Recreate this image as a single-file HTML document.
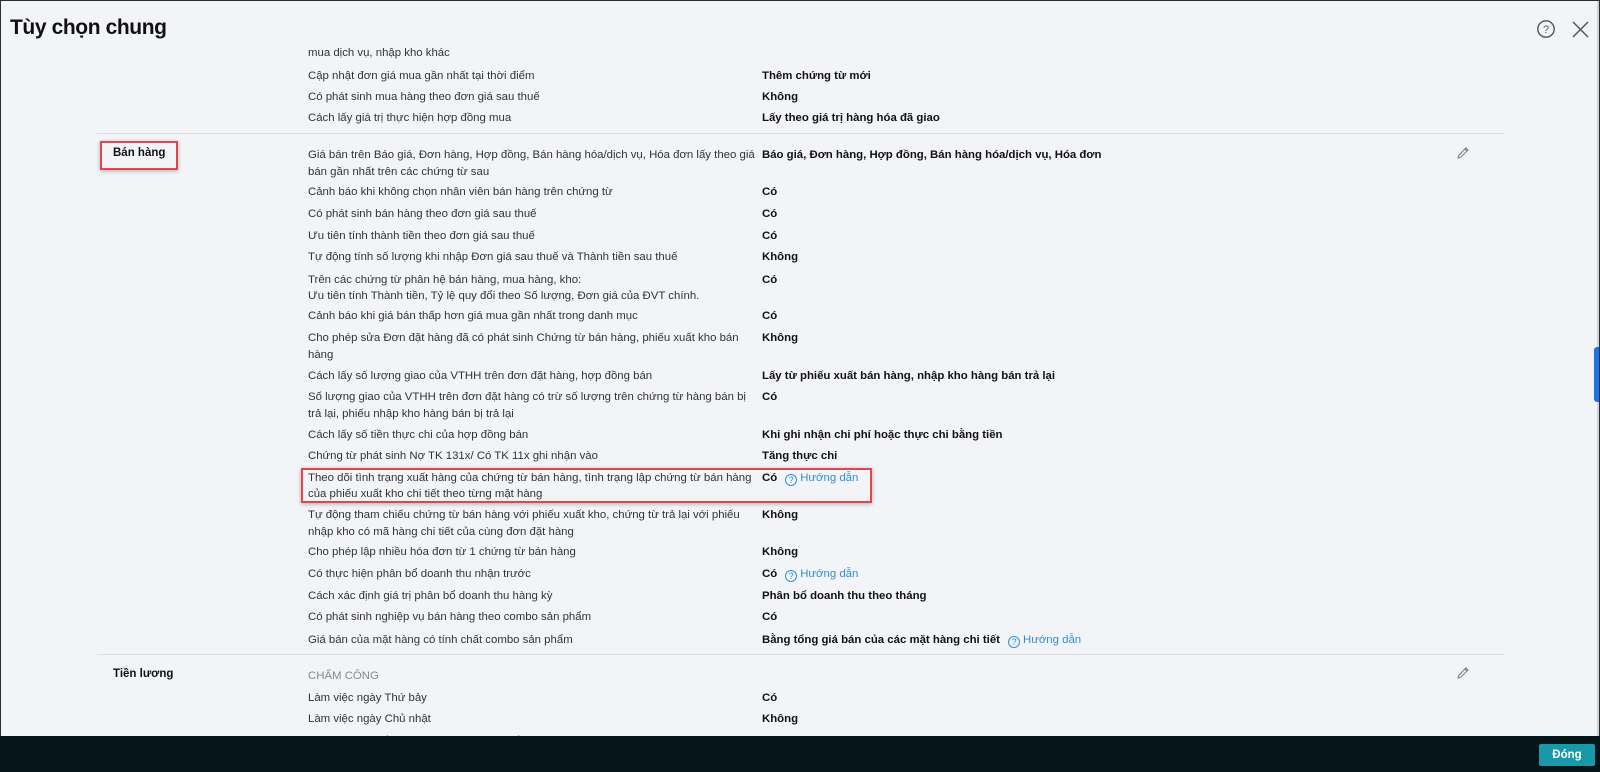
<!DOCTYPE html>
<html><head><meta charset="utf-8">
<style>
*{margin:0;padding:0;box-sizing:border-box}
html,body{width:1600px;height:772px;overflow:hidden;background:#2a2f33}
body{font-family:"Liberation Sans",sans-serif;color:#222}
#win{position:absolute;left:1px;top:1px;width:1598px;height:771px;background:#f3f4f8;overflow:hidden}
.t{position:absolute;left:9px;top:15px;font-size:21px;font-weight:bold;color:#111;letter-spacing:-0.4px}
#clip{position:absolute;left:0;top:44px;width:1596px;height:691px;overflow:hidden}
.r{position:absolute;font-size:11.4px;line-height:16.5px;white-space:nowrap}
.l{left:307px;color:#333}
.v{left:761px;font-weight:bold;color:#111}
.s{position:absolute;left:112px;font-size:11.5px;font-weight:bold;color:#111}
.hr{position:absolute;left:96px;width:1407px;height:1px;background:#dcdee3}
.h{color:#2f8fd6;font-weight:normal;margin-left:8px}
.q{display:inline-block;width:12px;height:12px;border:1px solid #2f8fd6;border-radius:50%;font-size:9px;line-height:10px;text-align:center;color:#2f8fd6;vertical-align:-2px;margin-right:3px}
.box{position:absolute;border:2px solid #e0464b;box-shadow:0 1px 4px rgba(0,0,0,.3)}
#bar{position:absolute;left:0;top:736px;width:1600px;height:36px;background:#06151a}
#btn{position:absolute;left:1539px;top:744px;width:56px;height:22px;background:#1899a8;border-radius:2px;color:#fff;font-size:11.5px;font-weight:bold;text-align:center;line-height:22px}
</style></head><body>
<div id="win">
<div class="t">Tùy chọn chung</div>
<svg style="position:absolute;left:1535px;top:18px" width="20" height="20" viewBox="0 0 20 20"><circle cx="10" cy="10" r="8.2" fill="none" stroke="#555" stroke-width="1.4"/><text x="10" y="14" font-size="11" text-anchor="middle" fill="#555" font-family="Liberation Sans">?</text></svg>
<svg style="position:absolute;left:1571px;top:20px" width="17" height="17" viewBox="0 0 17 17"><path d="M1 1L16 16M16 1L1 16" stroke="#555" stroke-width="1.5"/></svg>
<div id="clip">
<div class="r l" style="top:0px">mua dịch vụ, nhập kho khác</div>
<div class="r l" style="top:22.5px">Cập nhật đơn giá mua gần nhất tại thời điểm</div><div class="r v" style="top:22.5px">Thêm chứng từ mới</div>
<div class="r l" style="top:44px">Có phát sinh mua hàng theo đơn giá sau thuế</div><div class="r v" style="top:44px">Không</div>
<div class="r l" style="top:65px">Cách lấy giá trị thực hiện hợp đồng mua</div><div class="r v" style="top:65px">Lấy theo giá trị hàng hóa đã giao</div>
<div class="hr" style="top:88px"></div>
<div class="s" style="top:102px">Bán hàng</div>
<div class="box" style="left:99px;top:96px;width:78px;height:29px"></div>
<svg style="position:absolute;left:1455px;top:101px" width="14" height="14" viewBox="0 0 14 14"><path d="M2 12L3 9L10 2L12 4L5 11Z M9 3L11 5" fill="none" stroke="#777" stroke-width="1"/></svg>
<div class="r l" style="top:102px">Giá bán trên Báo giá, Đơn hàng, Hợp đồng, Bán hàng hóa/dịch vụ, Hóa đơn lấy theo giá<br>bán gần nhất trên các chứng từ sau</div><div class="r v" style="top:102px">Báo giá, Đơn hàng, Hợp đồng, Bán hàng hóa/dịch vụ, Hóa đơn</div>
<div class="r l" style="top:139px">Cảnh báo khi không chọn nhân viên bán hàng trên chứng từ</div><div class="r v" style="top:139px">Có</div>
<div class="r l" style="top:161px">Có phát sinh bán hàng theo đơn giá sau thuế</div><div class="r v" style="top:161px">Có</div>
<div class="r l" style="top:183px">Ưu tiên tính thành tiền theo đơn giá sau thuế</div><div class="r v" style="top:183px">Có</div>
<div class="r l" style="top:204px">Tự động tính số lượng khi nhập Đơn giá sau thuế và Thành tiền sau thuế</div><div class="r v" style="top:204px">Không</div>
<div class="r l" style="top:226.5px">Trên các chứng từ phân hệ bán hàng, mua hàng, kho:<br>Ưu tiên tính Thành tiền, Tỷ lệ quy đổi theo Số lượng, Đơn giá của ĐVT chính.</div><div class="r v" style="top:226.5px">Có</div>
<div class="r l" style="top:263px">Cảnh báo khi giá bán thấp hơn giá mua gần nhất trong danh mục</div><div class="r v" style="top:263px">Có</div>
<div class="r l" style="top:285px">Cho phép sửa Đơn đặt hàng đã có phát sinh Chứng từ bán hàng, phiếu xuất kho bán<br>hàng</div><div class="r v" style="top:285px">Không</div>
<div class="r l" style="top:322.5px">Cách lấy số lượng giao của VTHH trên đơn đặt hàng, hợp đồng bán</div><div class="r v" style="top:322.5px">Lấy từ phiếu xuất bán hàng, nhập kho hàng bán trả lại</div>
<div class="r l" style="top:344px">Số lượng giao của VTHH trên đơn đặt hàng có trừ số lượng trên chứng từ hàng bán bị<br>trả lại, phiếu nhập kho hàng bán bị trả lại</div><div class="r v" style="top:344px">Có</div>
<div class="r l" style="top:381.5px">Cách lấy số tiền thực chi của hợp đồng bán</div><div class="r v" style="top:381.5px">Khi ghi nhận chi phí hoặc thực chi bằng tiền</div>
<div class="r l" style="top:403px">Chứng từ phát sinh Nợ TK 131x/ Có TK 11x ghi nhận vào</div><div class="r v" style="top:403px">Tăng thực chi</div>
<div class="r l" style="top:424.5px">Theo dõi tình trạng xuất hàng của chứng từ bán hàng, tình trạng lập chứng từ bán hàng<br>của phiếu xuất kho chi tiết theo từng mặt hàng</div><div class="r v" style="top:424.5px">Có<span class="h"><span class="q">?</span>Hướng dẫn</span></div>
<div class="box" style="left:300px;top:423px;width:571px;height:35px"></div>
<div class="r l" style="top:462px">Tự động tham chiếu chứng từ bán hàng với phiếu xuất kho, chứng từ trả lại với phiếu<br>nhập kho có mã hàng chi tiết của cùng đơn đặt hàng</div><div class="r v" style="top:462px">Không</div>
<div class="r l" style="top:499px">Cho phép lập nhiều hóa đơn từ 1 chứng từ bán hàng</div><div class="r v" style="top:499px">Không</div>
<div class="r l" style="top:520.5px">Có thực hiện phân bổ doanh thu nhận trước</div><div class="r v" style="top:520.5px">Có<span class="h"><span class="q">?</span>Hướng dẫn</span></div>
<div class="r l" style="top:543px">Cách xác định giá trị phân bổ doanh thu hàng kỳ</div><div class="r v" style="top:543px">Phân bổ doanh thu theo tháng</div>
<div class="r l" style="top:564px">Có phát sinh nghiệp vụ bán hàng theo combo sản phẩm</div><div class="r v" style="top:564px">Có</div>
<div class="r l" style="top:587px">Giá bán của mặt hàng có tính chất combo sản phẩm</div><div class="r v" style="top:587px">Bằng tổng giá bán của các mặt hàng chi tiết<span class="h"><span class="q">?</span>Hướng dẫn</span></div>
<div class="hr" style="top:609px"></div>
<div class="s" style="top:622.5px">Tiền lương</div>
<svg style="position:absolute;left:1455px;top:621px" width="14" height="14" viewBox="0 0 14 14"><path d="M2 12L3 9L10 2L12 4L5 11Z M9 3L11 5" fill="none" stroke="#777" stroke-width="1"/></svg>
<div class="r l" style="top:622.5px;color:#888">CHẤM CÔNG</div>
<div class="r l" style="top:645px">Làm việc ngày Thứ bảy</div><div class="r v" style="top:645px">Có</div>
<div class="r l" style="top:666px">Làm việc ngày Chủ nhật</div><div class="r v" style="top:666px">Không</div>
<div class="r l" style="top:688px">Tự động tính số ngày công theo bảng chấm công</div><div class="r v" style="top:688px">Có</div>
</div>
<div style="position:absolute;left:1596px;top:0;width:2px;height:771px;background:#cfd2d8"></div>
<div style="position:absolute;left:1593px;top:346px;width:6px;height:55px;background:#1a73e8;border-radius:3px 0 0 3px"></div>
</div>
<div id="bar"></div>
<div id="btn">Đóng</div>
</body></html>
